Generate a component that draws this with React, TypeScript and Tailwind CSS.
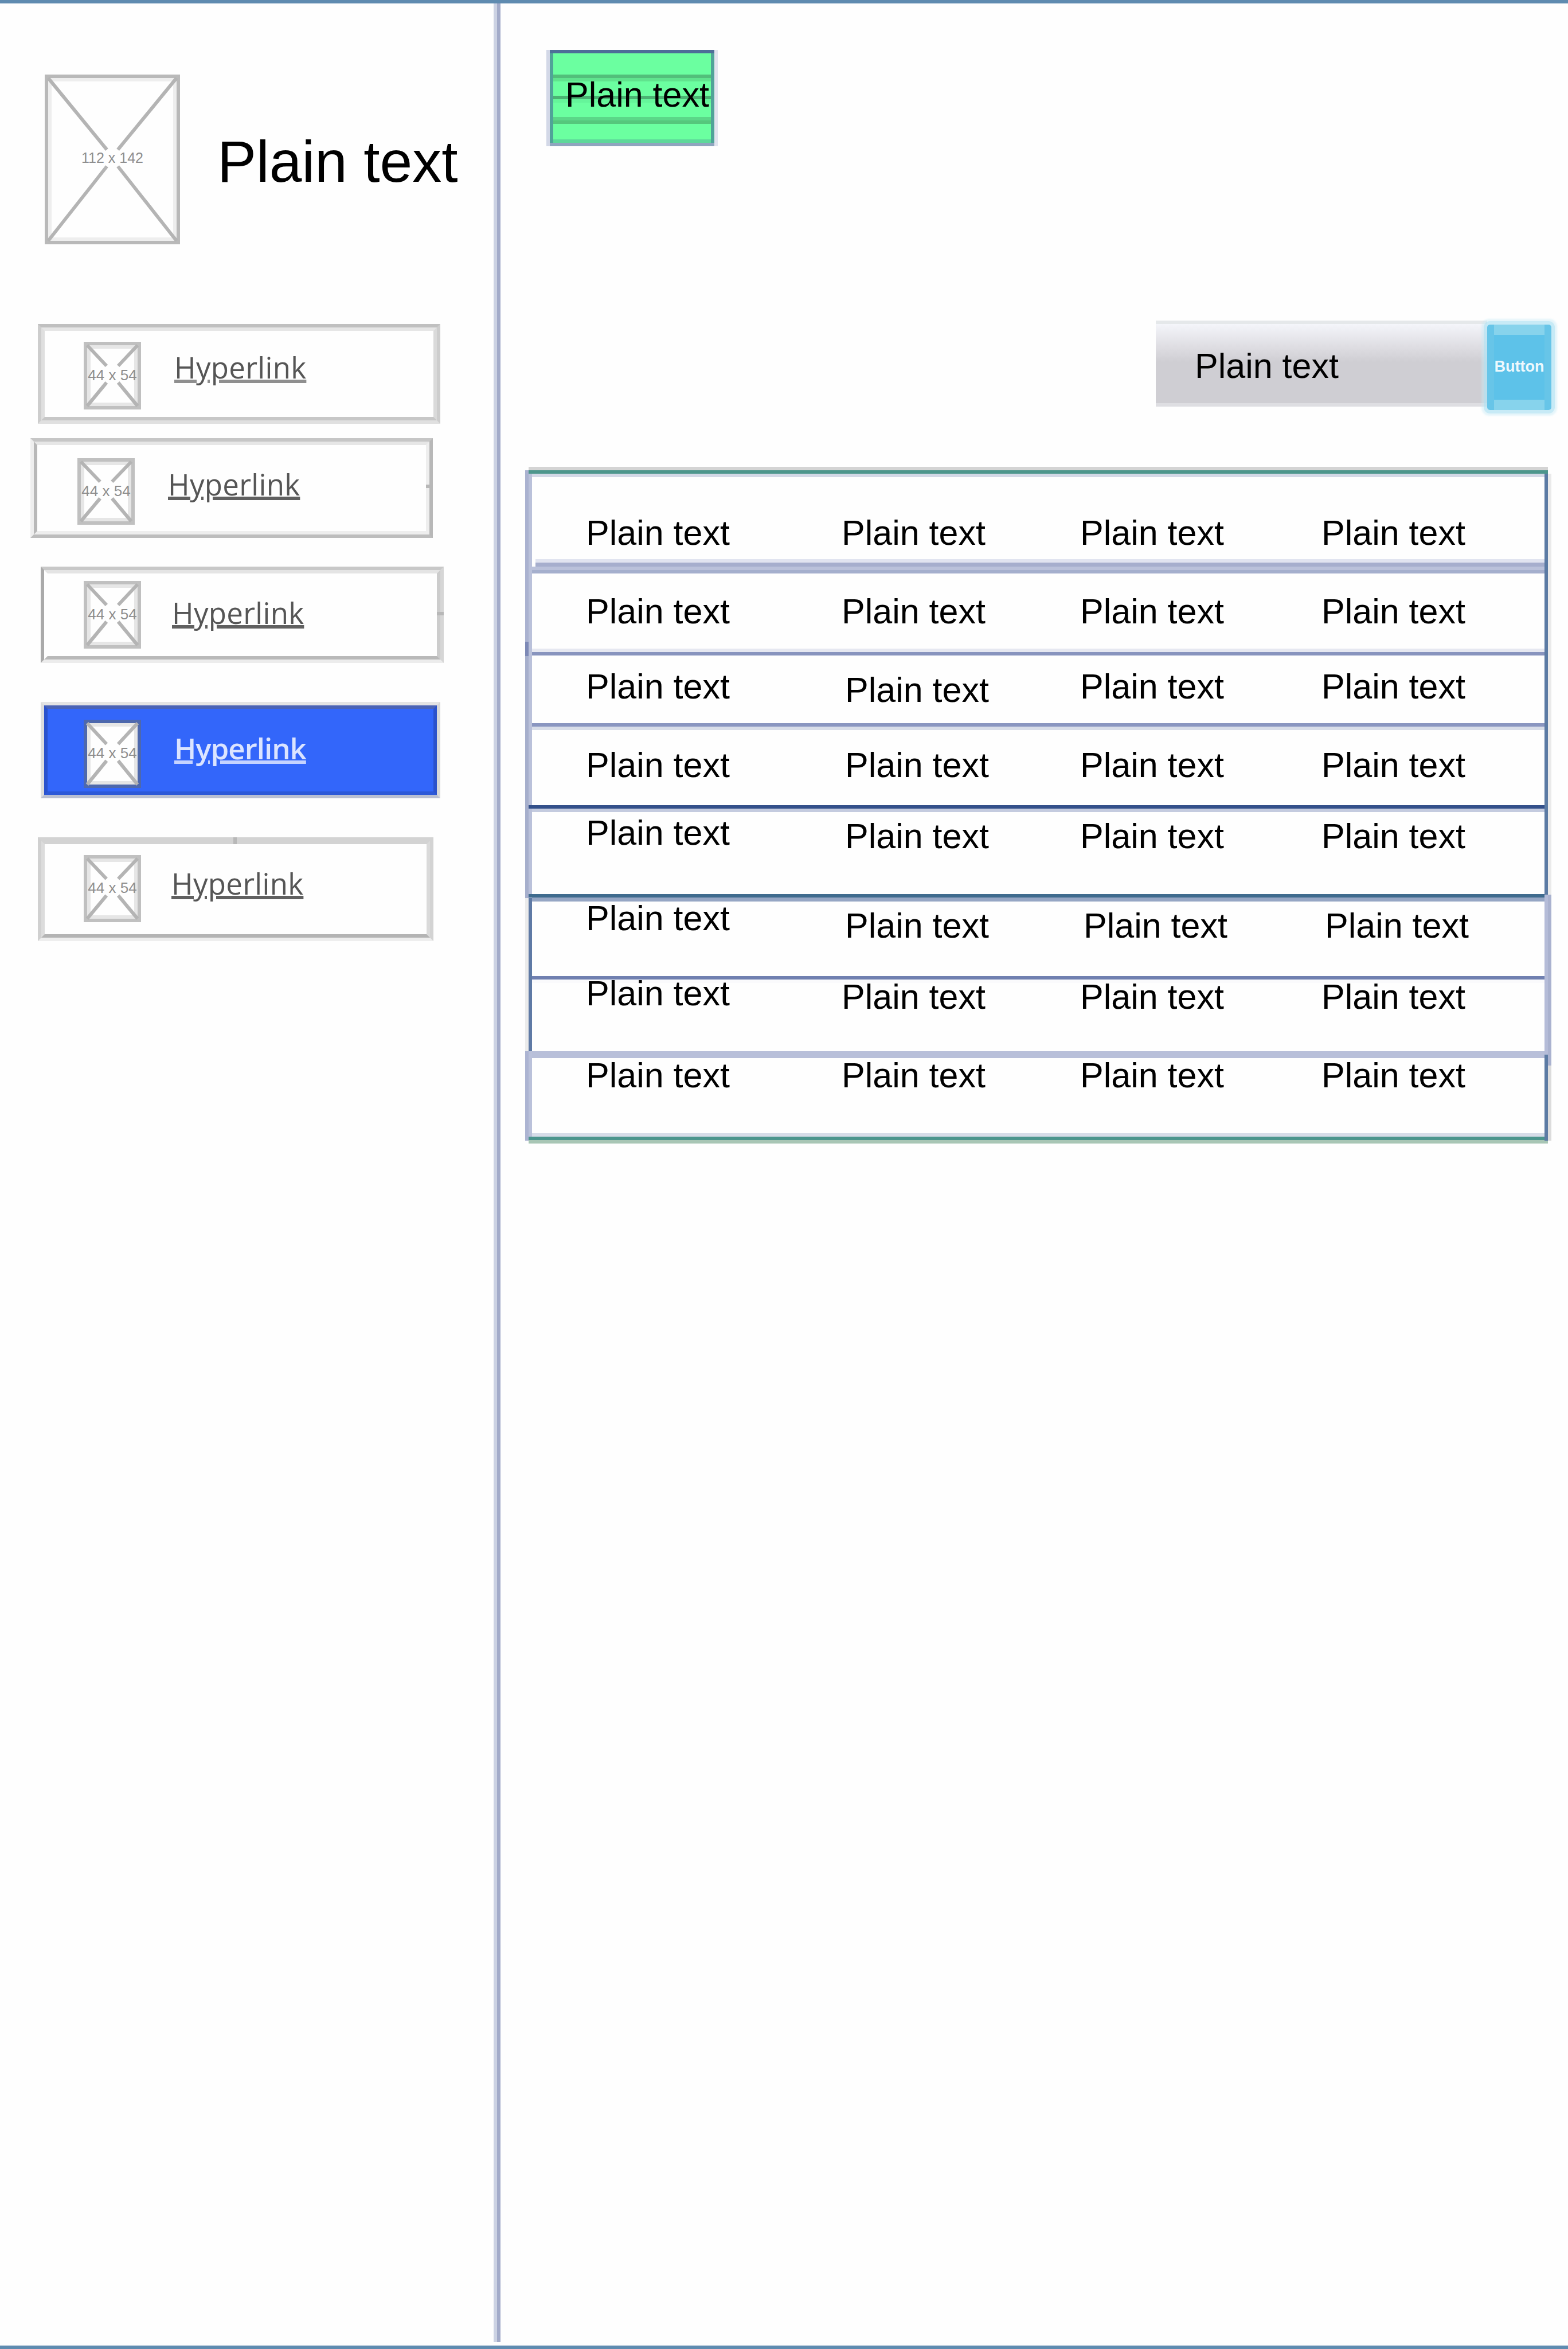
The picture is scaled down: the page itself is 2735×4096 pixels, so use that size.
import React from "react";

type LineSpec = [height: string, color: string];

function Rules({ lines, className = "" }: { lines: LineSpec[]; className?: string }) {
  return (
    <div className={`flex shrink-0 flex-col ${className}`}>
      {lines.map(([h, c], i) => (
        <div key={i} className={`${h} ${c}`} />
      ))}
    </div>
  );
}

function Placeholder({ w, h, label, edge, soft, fs }: { w: number; h: number; label: string; edge: string; soft: string; fs: number }) {
  const cx = w / 2;
  const ty = h * 0.49;
  const gap = 12;
  const k = (gap * w) / h;
  return (
    <svg width={w} height={h} viewBox={`0 0 ${w} ${h}`} className="block shrink-0" fontFamily="Liberation Sans, Arial, sans-serif">
      <rect x={0} y={0} width={w} height={h} fill="#fefefe" />
      <rect x={9} y={9} width={w - 18} height={h - 18} fill="none" stroke={soft} strokeWidth={6} />
      <rect x={3} y={3} width={w - 6} height={h - 6} fill="none" stroke={edge} strokeWidth={6} />
      <g stroke="#b4b4b4" strokeWidth={6}>
        <path d={`M6 6L${cx - k} ${h / 2 - gap - 5}M${w - 6} 6L${cx + k} ${h / 2 - gap - 5}`} />
        <path d={`M6 ${h - 6}L${cx - k} ${h / 2 + gap}M${w - 6} ${h - 6}L${cx + k} ${h / 2 + gap}`} />
      </g>
      <text x={cx} y={ty + 9} textAnchor="middle" fontSize={fs} fill="#8e8e8e">
        {label}
      </text>
    </svg>
  );
}

interface NavItem {
  box: string;
  inner: string;
  iconWrap: string;
  text: string;
  iconH: number;
  active?: boolean;
  tick?: string;
}

const navItems: NavItem[] = [
  {
    box: "mt-[139px] ml-[66px] w-[702px] h-[174px] border-t-[#c0c0c0] border-b-[#e0e0e0] border-l-[#cdcdcd] border-r-[#cdcdcd]",
    inner: "border-t-[#e6e6e6] border-b-[#c7c7c7] border-l-[#dfdfdf] border-r-[#dadada]",
    iconWrap: "ml-[68px] mt-[19px]",
    text: "ml-[58px] mt-[33px] decoration-[#8f8f8f]",
    iconH: 118,
  },
  {
    box: "mt-[25px] ml-[53px] w-[702px] h-[174px] border-t-[#c6c6c6] border-b-[#bdbdbd] border-l-[#eeeeee] border-r-[#b8b8b8]",
    inner: "border-t-[#e6e6e6] border-b-[#eeeeee] border-l-[#b8b8b8] border-r-[#eeeeee]",
    iconWrap: "ml-[70px] mt-[23px]",
    text: "ml-[58px] mt-[38px] decoration-[#606060]",
    iconH: 116,
    tick: "right-[-6px] top-[75px] h-[6px] w-[12px]",
  },
  {
    box: "mt-[50px] ml-[71px] w-[703px] h-[168px] border-t-[#c8c8c8] border-b-[#ececec] border-l-[#aaaaaa] border-r-[#d6d6d6]",
    inner: "border-t-[#e4e4e4] border-b-[#b9b9b9] border-l-[#fefefe] border-r-[#cccccc]",
    iconWrap: "ml-[63px] mt-[13px]",
    text: "ml-[54px] mt-[38px] decoration-[#606060]",
    iconH: 118,
    tick: "right-[-6px] top-[73px] h-[6px] w-[12px]",
  },
  {
    box: "mt-[68px] ml-[71px] w-[697px] h-[168px] border-t-[#e4e4e4] border-b-[#b9bfd2] border-l-[#dddddd] border-r-[#d8d8d8] bg-[#3366fa]",
    inner: "border-t-[#4a63b6] border-b-[#2c58d8] border-l-[#2b52cc] border-r-[#2b52cc]",
    iconWrap: "ml-[63px] mt-[19px]",
    text: "ml-[58px] mt-[38px] text-[#dbe4ff] decoration-[#c5d3ff]",
    iconH: 119,
    active: true,
  },
  {
    box: "mt-[68px] ml-[66px] w-[690px] h-[181px] border-t-[#d3d3d3] border-b-[#eeeeee] border-l-[#d0d0d0] border-r-[#d3d3d3]",
    inner: "border-t-[#d3d3d3] border-b-[#b4b4b4] border-l-[#dcdcdc] border-r-[#dadada]",
    iconWrap: "ml-[68px] mt-[19px]",
    text: "ml-[53px] mt-[38px] decoration-[#606060]",
    iconH: 117,
    tick: "left-[335px] top-[-6px] h-[12px] w-[6px]",
  },
];

function NavBox({ item }: { item: NavItem }) {
  return (
    <div className={`relative shrink-0 border-[6px] ${item.box}`}>
      <div className={`flex h-full items-start border-[6px] ${item.inner}`}>
        <div className={item.iconWrap}>
          <Placeholder w={100} h={item.iconH} label="44 x 54" edge={item.active ? "#4d68ad" : "#c0c0c0"} soft="#e6e6e6" fs={26} />
        </div>
        <a
          className={`whitespace-nowrap font-['Open_Sans',sans-serif] text-[51px] leading-[60px] underline decoration-[6px] underline-offset-[2px] ${item.active ? "font-semibold tracking-[-1px]" : "font-medium tracking-[0.3px] text-[#555555]"} ${item.text}`}
        >
          Hyperlink
        </a>
      </div>
      {item.tick && <div className={`absolute bg-[#b8b8b8] ${item.tick}`} />}
    </div>
  );
}

/* Each row: body height, per-cell offsets, and the rules drawn under it */
interface Row {
  height: string;
  cells: [string, string, string, string];
  lines: LineSpec[];
}

const rows: Row[] = [
  {
    height: "h-[143px]",
    cells: ["pt-[61px]", "pt-[61px]", "pt-[61px]", "pt-[61px]"],
    lines: [["h-[6px]", "bg-[#e1e4f0] ml-[6px] -mr-[12px]"], ["h-[7px]", "bg-[#a6aecd] ml-[6px] -mr-[12px]"], ["h-[6px]", "bg-[#bac1da]"], ["h-[6px]", "bg-[#a5afcd]"]],
  },
  {
    height: "h-[131px]",
    cells: ["pt-[30px]", "pt-[30px]", "pt-[30px]", "pt-[30px]"],
    lines: [["h-[6px]", "bg-[#e6e8f1]"], ["h-[6px]", "bg-[#8894be]"]],
  },
  {
    height: "h-[118px]",
    cells: ["pt-[18px]", "pt-[24px] pl-[6px]", "pt-[18px]", "pt-[18px]"],
    lines: [["h-[6px]", "bg-[#8a96c0]"], ["h-[6px]", "bg-[#d8dde8]"]],
  },
  {
    height: "h-[131px]",
    cells: ["pt-[25px]", "pt-[25px] pl-[6px]", "pt-[25px]", "pt-[25px]"],
    lines: [["h-[6px]", "bg-[#33508a] -ml-[6px]"], ["h-[6px]", "bg-[#c4cbdf]"]],
  },
  {
    height: "h-[143px]",
    cells: ["pt-[0px]", "pt-[6px] pl-[6px]", "pt-[6px]", "pt-[6px]"],
    lines: [["h-[6px]", "bg-[#3f6b8e] -ml-[6px]"], ["h-[7px]", "bg-[#96a6c4]"]],
  },
  {
    height: "h-[130px]",
    cells: ["-mt-[7px]", "pt-[6px] pl-[6px]", "pt-[6px] pl-[6px]", "pt-[6px] pl-[6px]"],
    lines: [["h-[6px]", "bg-[#7080b0] -mr-[12px]"], ["h-[6px]", "bg-[#fafafc]"]],
  },
  {
    height: "h-[119px]",
    cells: ["-mt-[18px]", "-mt-[12px]", "-mt-[12px]", "-mt-[12px]"],
    lines: [["h-[12px]", "bg-[#b8bfd9]"]],
  },
  {
    height: "h-[131px]",
    cells: ["-mt-[6px]", "-mt-[6px]", "-mt-[6px]", "-mt-[6px]"],
    lines: [["h-[6px]", "bg-[#d6dce8]"], ["h-[6px]", "bg-[#4b958d] -ml-[6px] -mr-[6px]"], ["h-[6px]", "bg-[#a8c6b5] -ml-[6px] -mr-[6px]"]],
  },
];

function Seg({ h, a, b }: { h: string; a: string; b: string }) {
  return (
    <div className={`flex shrink-0 ${h}`}>
      <div className={`w-[6px] ${a}`} />
      <div className={`w-[6px] ${b}`} />
    </div>
  );
}

function DataTable() {
  return (
    <div className="ml-[43px] mt-[99px] flex w-[1791px]">
      <div className="mt-[6px] flex w-[12px] shrink-0 flex-col">
        <Seg h="h-[299px]" a="bg-[#aab2d0]" b="bg-[#bac1da]" />
        <Seg h="h-[25px]" a="bg-[#7d89b6]" b="bg-[#bac1da]" />
        <Seg h="h-[422px]" a="bg-[#a6afcc]" b="bg-[#bac1da]" />
        <Seg h="h-[267px]" a="bg-[#ebebeb]" b="bg-[#5f7aa5]" />
        <Seg h="h-[156px]" a="bg-[#acb4d2]" b="bg-[#bac1da]" />
      </div>
      <div className="flex w-[1766px] shrink-0 flex-col">
        <Rules className="-ml-[6px] -mr-[6px]" lines={[["h-[6px]", "bg-[#d4d4d4]"], ["h-[6px]", "bg-[#4d968c]"], ["h-[6px]", "ml-[6px] mr-[6px] bg-[#d3d8e6]"]]} />
        {rows.map((r, i) => (
          <div key={i} className="flex flex-col">
            <div className={`grid grid-cols-[446px_416px_421px_390px] pl-[94px] ${r.height}`}>
              {r.cells.map((c, j) => (
                <div key={j} className={`whitespace-nowrap text-[61px] leading-[72px] ${c}`}>
                  Plain text
                </div>
              ))}
            </div>
            <Rules lines={r.lines} />
          </div>
        ))}
      </div>
      <div className="mt-[12px] flex w-[12px] shrink-0 flex-col">
        <Seg h="h-[734px]" a="bg-[#5c7ba4]" b="bg-[#eaeaea]" />
        <Seg h="h-[279px]" a="bg-[#b5bcd8]" b="bg-[#aab2cf]" />
        <Seg h="h-[19px]" a="bg-[#5c7ba4]" b="bg-[#aab2cf]" />
        <Seg h="h-[131px]" a="bg-[#5c7ba4]" b="bg-[#dcdcdc]" />
      </div>
    </div>
  );
}

function GreenBadge() {
  return (
    <div className="ml-[80px] mt-[81px] flex h-[168px] w-[299px]">
      <div className="w-[6px] bg-[#d3d8e7]" />
      <div className="relative flex flex-1 flex-col border-t-[6px] border-b-[6px] border-t-[#4d6e98] border-b-[#8fa5be] bg-[#6bffa0]">
        <div className="flex flex-1 flex-col border-x-[6px] border-[#50a398]">
          <div className="mt-[37px] h-[6px] bg-[#52bf7a]" />
          <div className="h-[6px] bg-[#60e48e]" />
          <div className="mt-[25px] h-[6px] bg-[#4bb373]" />
          <div className="h-[6px] bg-[#65f59a]" />
          <div className="mt-[25px] h-[6px] bg-[#5bd788]" />
          <div className="h-[6px] bg-[#55c77c]" />
          <div className="mt-auto h-[6px] bg-[#5dd89a]" />
        </div>
        <span className="absolute left-[27px] top-[36px] whitespace-nowrap text-[61px] leading-[72px]">Plain text</span>
      </div>
      <div className="w-[6px] bg-[#e1e4ee]" />
    </div>
  );
}

function SearchBar() {
  return (
    <div className="mt-[304px] ml-[1143px] flex items-start">
      <div className="h-[150px] w-[578px] border-t-[6px] border-b-[6px] border-t-[#e5e8ea] border-b-[#dedee2] bg-[linear-gradient(180deg,#f4f5fa_0px,#e9e9ee_20px,#dddce1_42px,#cfced3_66px)] pl-[68px] pt-[37px]">
        <span className="block whitespace-nowrap text-[61px] leading-[72px]">Plain text</span>
      </div>
      <button className="mt-[7px] flex h-[149px] w-[112px] items-center justify-center rounded-[5px] border-x-[12px] border-[#67c5e8] bg-[#5dc2e9] shadow-[0_0_0_6px_#b0e1f290,0_0_3px_10px_#c6ebf670]">
        <span className="flex h-full w-[88px] items-center justify-center border-y-[18px] border-[#87d3ec] pb-[3px] text-[27px] font-bold leading-none text-[#eef9fd]">
          Button
        </span>
      </button>
    </div>
  );
}

export default function App() {
  return (
    <div className="flex h-[4096px] w-[2735px] flex-col overflow-hidden bg-[#fefefe] font-['Liberation_Sans',Arial,sans-serif] text-black">
      <div className="h-[6px] shrink-0 bg-[#5f8bb0]" />
      <div className="flex h-[4078px] shrink-0">
        <aside className="flex w-[861px] shrink-0 flex-col">
          <div className="ml-[78px] mt-[124px] flex h-[296px] shrink-0 items-start">
            <Placeholder w={236} h={296} label="112 x 142" edge="#b9b9b9" soft="#eeeeee" fs={25} />
            <h1 className="ml-[65px] mt-[92px] whitespace-nowrap text-[102px] leading-[120px]">Plain text</h1>
          </div>
          {navItems.map((item, i) => (
            <NavBox key={i} item={item} />
          ))}
        </aside>
        <div className="w-[6px] shrink-0 bg-[#ccd2e3]" />
        <div className="w-[6px] shrink-0 bg-[#a3abc9]" />
        <main className="flex min-w-0 flex-1 flex-col">
          <GreenBadge />
          <SearchBar />
          <DataTable />
        </main>
      </div>
      <div className="mt-auto h-[6px] shrink-0 bg-[#5f8bb0]" />
    </div>
  );
}
